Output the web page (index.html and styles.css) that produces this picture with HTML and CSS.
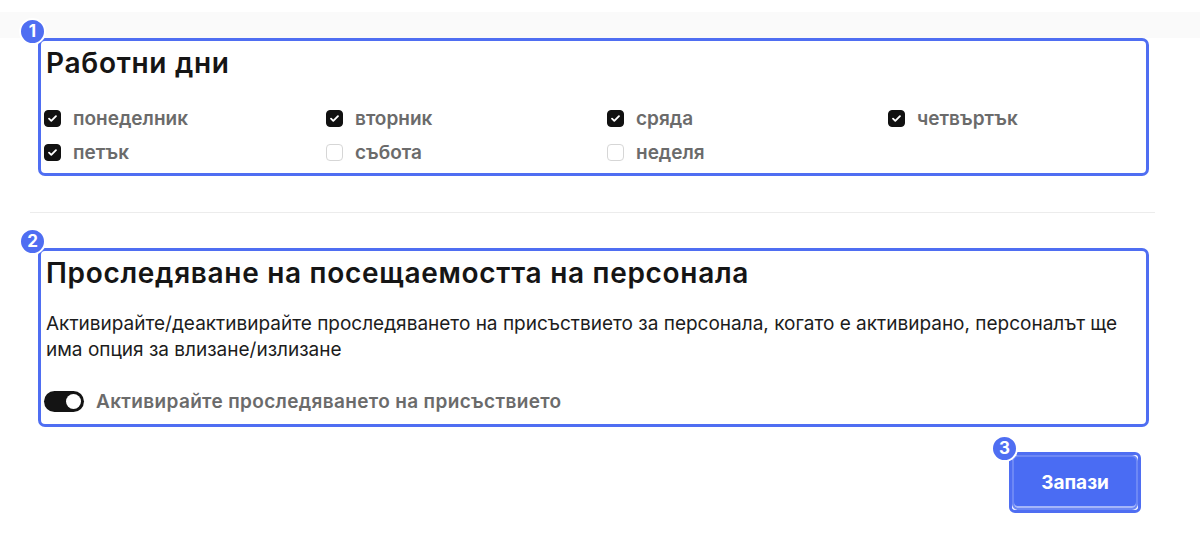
FILE: index.html
```html
<!DOCTYPE html>
<html lang="bg">
<head>
<meta charset="utf-8">
<link rel="stylesheet" href="styles.css">
</head>
<body>
<div class="band"></div>
<section class="box box-days">
  <span class="badge">1</span>
  <h2 class="title">Работни дни</h2>
  <div class="days">
    <label class="day"><span class="cb on"><svg viewBox="0 0 16 16"><path d="M4.3 8.2l2.4 2.3 5-5" fill="none" stroke="#fff" stroke-width="2" stroke-linecap="round" stroke-linejoin="round"/></svg></span>понеделник</label>
    <label class="day"><span class="cb on"><svg viewBox="0 0 16 16"><path d="M4.3 8.2l2.4 2.3 5-5" fill="none" stroke="#fff" stroke-width="2" stroke-linecap="round" stroke-linejoin="round"/></svg></span>вторник</label>
    <label class="day"><span class="cb on"><svg viewBox="0 0 16 16"><path d="M4.3 8.2l2.4 2.3 5-5" fill="none" stroke="#fff" stroke-width="2" stroke-linecap="round" stroke-linejoin="round"/></svg></span>сряда</label>
    <label class="day"><span class="cb on"><svg viewBox="0 0 16 16"><path d="M4.3 8.2l2.4 2.3 5-5" fill="none" stroke="#fff" stroke-width="2" stroke-linecap="round" stroke-linejoin="round"/></svg></span>четвъртък</label>
    <label class="day"><span class="cb on"><svg viewBox="0 0 16 16"><path d="M4.3 8.2l2.4 2.3 5-5" fill="none" stroke="#fff" stroke-width="2" stroke-linecap="round" stroke-linejoin="round"/></svg></span>петък</label>
    <label class="day"><span class="cb"></span>събота</label>
    <label class="day"><span class="cb"></span>неделя</label>
  </div>
</section>
<hr class="divider">
<section class="box box-track">
  <span class="badge">2</span>
  <h2 class="title">Проследяване на посещаемостта на персонала</h2>
  <p class="desc">Активирайте/деактивирайте проследяването на присъствието за персонала, когато е активирано, персоналът ще има опция за влизане/излизане</p>
  <label class="toggle-row"><span class="toggle"><span class="knob"></span></span>Активирайте проследяването на присъствието</label>
</section>
<div class="actions">
  <div class="btn-wrap">
    <span class="badge">3</span>
    <button class="btn">Запази</button>
  </div>
</div>
</body>
</html>
```
FILE: styles.css
```css
* { box-sizing: border-box; }
body {
  margin: 0;
  background: #fff;
  font-family: Inter, "Noto Sans", sans-serif;
  color: #1a1a1a;
}
.band {
  height: 26px;
  margin-top: 12px;
  background: #fafafa;
}
.box {
  position: relative;
  margin: 0 51px 0 38px;
  border: 3px solid #4f6ef2;
  border-radius: 7px;
}
.box-days {
  height: 138px;
  padding: 6px 6px 0 3px;
}
.badge {
  position: absolute;
  left: -22px;
  top: -23px;
  width: 27px;
  height: 27px;
  border-radius: 50%;
  background: #4f6ef2;
  border: 2px solid #fff;
  color: #fff;
  font-size: 17px;
  font-weight: 700;
  display: flex;
  align-items: center;
  justify-content: center;
  line-height: 1;
}
.title {
  margin: 0 0 0 2px;
  font-size: 28px;
  line-height: 32px;
  font-weight: 600;
  color: #151515;
  letter-spacing: 0.7px;
}
.days {
  margin-top: 27px;
  display: grid;
  grid-template-columns: 282px 281px 281px auto;
  row-gap: 10px;
}
.day {
  display: flex;
  align-items: center;
  gap: 12px;
  height: 24px;
  font-size: 19px;
  font-weight: 600;
  color: #6b6b6b;
}
.cb {
  width: 17px;
  height: 17px;
  border-radius: 4px;
  border: 1px solid #d6d6d6;
  background: #fff;
  flex: none;
  display: flex;
}
.cb.on {
  background: #111;
  border-color: #111;
}
.cb svg { width: 100%; height: 100%; }
.divider {
  margin: 36px 45px 0 30px;
  border: 0;
  border-top: 1px solid #ececec;
  height: 0;
}
.box-track {
  margin-top: 35px;
  height: 179px;
  padding: 6px 6px 0 3px;
}
.desc {
  margin: 22px 0 0 2px;
  font-size: 19px;
  line-height: 26px;
  color: #1c1c1c;
}
.toggle-row {
  margin-top: 27px;
  display: flex;
  align-items: center;
  gap: 12px;
  font-size: 19px;
  font-weight: 600;
  color: #6b6b6b;
  letter-spacing: 0.35px;
}
.toggle {
  width: 40px;
  height: 21px;
  border-radius: 11px;
  background: #141414;
  display: flex;
  align-items: center;
  justify-content: flex-end;
  padding-right: 3px;
  flex: none;
}
.knob {
  width: 15px;
  height: 15px;
  border-radius: 50%;
  background: #fff;
}
.actions {
  display: flex;
  justify-content: flex-end;
  padding-right: 59px;
  margin-top: 25px;
}
.btn-wrap {
  position: relative;
  border: 3px solid #4f6ef2;
  border-radius: 6px;
}
.btn-wrap .badge { left: -21px; top: -20px; }
.btn {
  display: block;
  width: 126px;
  height: 55px;
  border: 2px solid #6d88f5;
  border-radius: 6px;
  background: #4a6cf3;
  color: #fff;
  font-family: Inter, "Noto Sans", sans-serif;
  font-size: 19px;
  font-weight: 700;
  box-shadow: inset 0 -2px 0 rgba(255,255,255,0.5);
}
```
